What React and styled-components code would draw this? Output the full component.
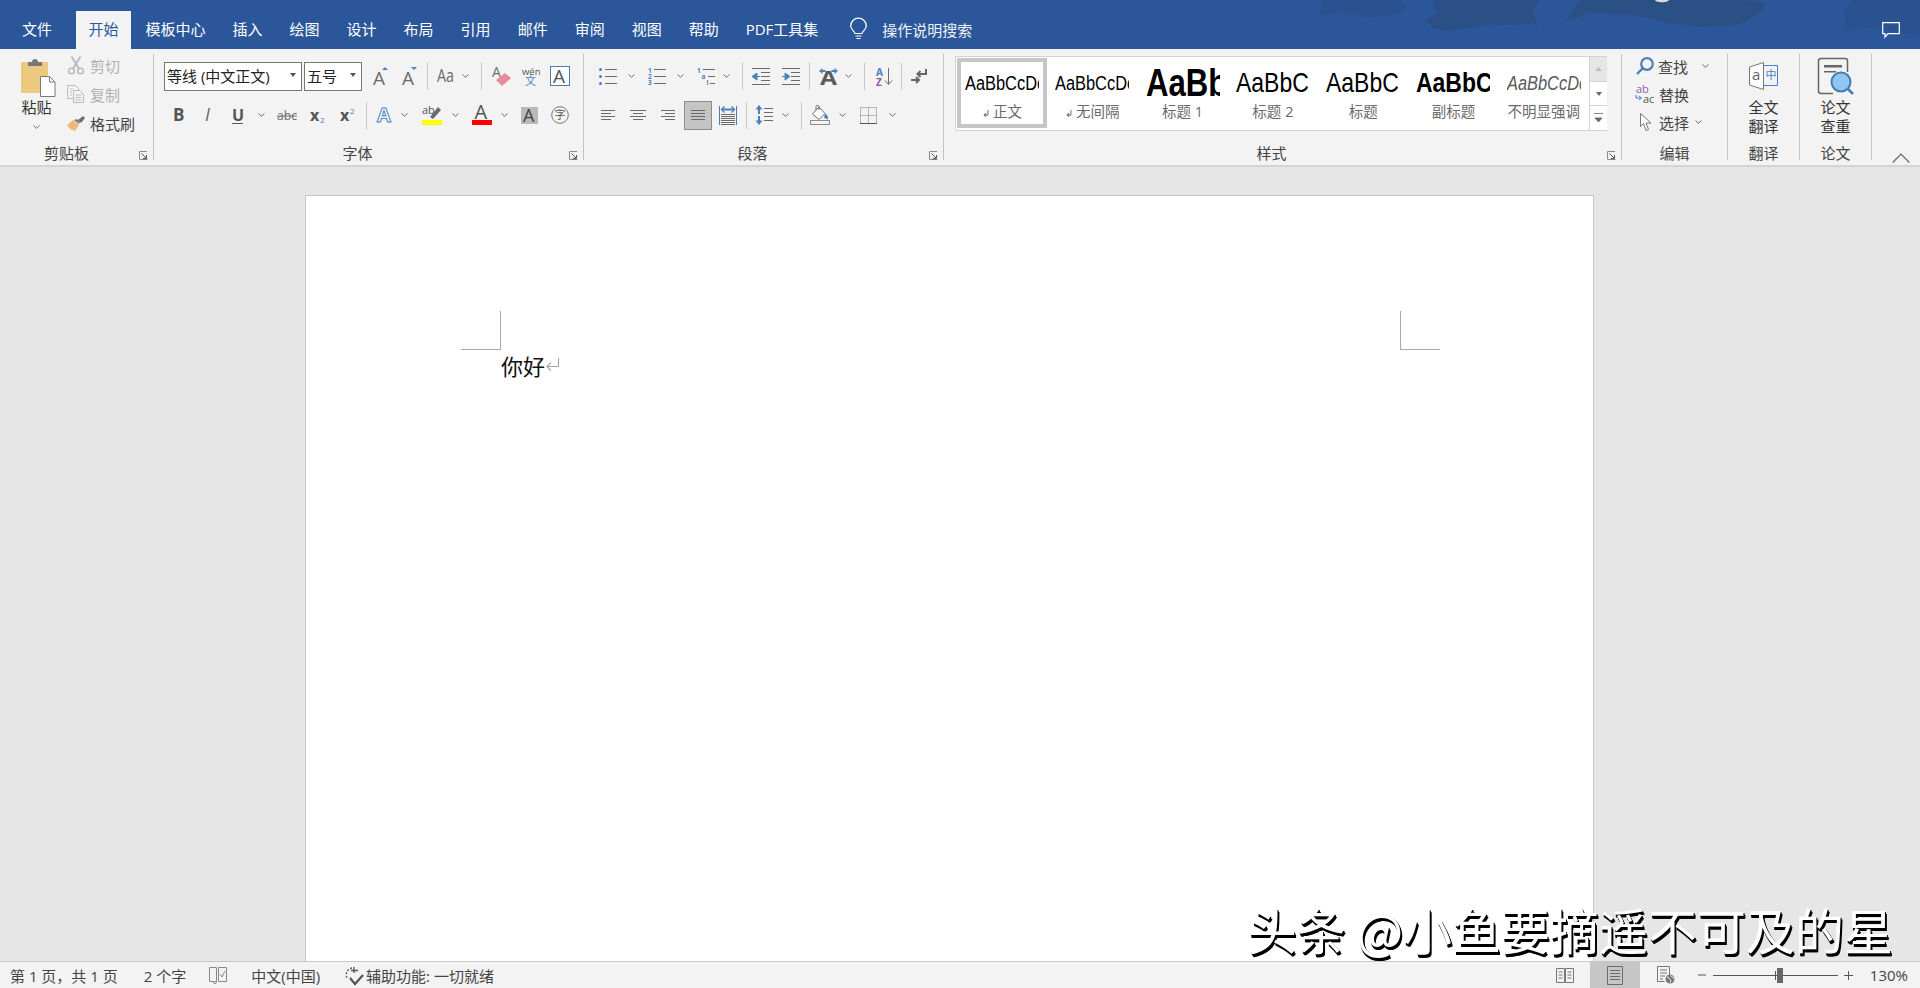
import React from 'react';
import styled, { createGlobalStyle } from 'styled-components';

const GlobalStyle = createGlobalStyle`
  html, body { margin: 0; padding: 0; height: 100%; overflow: hidden; }
  body { font-family: "Open Sans", "Noto Sans CJK SC", sans-serif; color: #444; }
  svg { overflow: visible; }
`;

const tabs = ['开始', '模板中心', '插入', '绘图', '设计', '布局', '引用', '邮件', '审阅', '视图', '帮助', 'PDF工具集'];
const GRAY = '#6b6b6b';
const BLUE = '#4a80c0';
const UI = '"Open Sans", "Liberation Sans", sans-serif';

const Window = styled.div`
  position: relative;
  width: 1920px;
  height: 988px;
  display: flex;
  flex-direction: column;
  overflow: hidden;
  background: #e6e6e6;
`;

const TitleBar = styled.div`
  position: relative;
  flex: none;
  height: 49px;
  background: #2b579a;
  display: flex;
  align-items: flex-end;
`;

const Art = styled.svg`
  position: absolute;
  right: 0;
  top: 0;
`;

const Tab = styled.div`
  position: relative;
  height: 38px;
  line-height: 36px;
  padding: 0 ${p => p.$pad || 12.5}px;
  margin-right: ${p => p.$gap ?? 2}px;
  font-size: 15px;
  white-space: nowrap;
  color: ${p => (p.$active ? '#2b579a' : '#fff')};
  background: ${p => (p.$active ? '#f3f3f3' : 'transparent')};
`;

const SearchTab = styled.div`
  position: relative;
  height: 36px;
  margin: 0 0 2px 17.5px;
  display: flex;
  align-items: center;
  gap: 15px;
  font-size: 15px;
  color: #eef2f8;
`;

const CommentBtn = styled.svg`
  position: absolute;
  left: 1882px;
  top: 22px;
`;

const Ribbon = styled.div`
  flex: none;
  height: 111px;
  padding-top: 5px;
  box-sizing: content-box;
  display: flex;
  align-items: flex-start;
  background: #f3f3f3;
  border-bottom: 2px solid #d4d4d4;
`;

const Group = styled.div`
  position: relative;
  flex: none;
  width: ${p => p.$w}px;
  height: 106px;
  box-sizing: border-box;
  border-right: ${p => (p.$last ? 'none' : '1px solid #c4c4c4')};
  display: flex;
  flex-direction: column;
`;

const GroupBody = styled.div`
  flex: 1;
  min-height: 0;
  display: flex;
  flex-direction: ${p => p.$dir || 'row'};
  padding-top: ${p => p.$top || 0}px;
  gap: ${p => p.$gap || 0}px;
`;

const GroupLabel = styled.div`
  flex: none;
  height: 14px;
  line-height: 14px;
  font-size: 15px;
  text-align: center;
  color: #444;
  padding-right: ${p => p.$shift || 0}px;
  white-space: nowrap;
  overflow: visible;
`;

const Collapse = styled.div`
  flex: none;
  height: 14px;
  margin-top: -4px;
  padding-left: 20px;
`;

const Launcher = styled.svg`
  position: absolute;
  right: 5px;
  bottom: 0;
`;

const ToolRow = styled.div`
  display: flex;
  align-items: center;
  height: 30px;
`;

const Tool = styled.span`
  flex: none;
  display: flex;
  align-items: center;
  justify-content: center;
  margin-left: ${p => p.$ml || 0}px;
  width: ${p => p.$w}px;
`;

const Sep = styled.span`
  flex: none;
  width: 1px;
  height: 27px;
  margin-left: ${p => p.$ml || 0}px;
  background: #c6c6c6;
`;

const ComboBox = styled.div`
  flex: none;
  box-sizing: border-box;
  width: ${p => p.$w}px;
  height: 29px;
  margin-left: ${p => p.$ml || 0}px;
  padding: 0 5px 2px 2px;
  display: flex;
  align-items: center;
  justify-content: space-between;
  background: #fff;
  border: 1px solid #777;
  font-size: 15px;
  color: #222;
  white-space: nowrap;
`;

const DownTri = styled.span`
  width: 0;
  height: 0;
  border-left: 3.5px solid transparent;
  border-right: 3.5px solid transparent;
  border-top: 4px solid ${p => p.$c || '#555'};
`;

const PasteCol = styled.div`
  margin-left: 21px;
  width: 36px;
  padding-top: 4px;
  display: flex;
  flex-direction: column;
  align-items: flex-start;
`;

const PasteLabel = styled.div`
  font-size: 15px;
  line-height: 20px;
  width: 31px;
  text-align: center;
  color: #333;
`;

const PasteChev = styled.div`
  width: 31px;
  display: flex;
  justify-content: center;
  margin-top: 8px;
`;

const SmallCol = styled.div`
  margin: -1px 0 0 10px;
  display: flex;
  flex-direction: column;
  gap: 5px;
`;

const SmallRow = styled.div`
  height: 24px;
  display: flex;
  align-items: center;
  gap: ${p => p.$gap || 6}px;
  font-size: 15px;
  white-space: nowrap;
  color: ${p => (p.$off ? '#b1b1b1' : '#444')};
`;

const IconSlot = styled.span`
  flex: none;
  width: ${p => p.$w || 18}px;
  display: flex;
  align-items: center;
  justify-content: center;
`;

const Gallery = styled.div`
  margin: 2px 0 0 11px;
  width: 652px;
  height: 75px;
  box-sizing: border-box;
  display: flex;
  background: #fff;
  border: 1px solid #d2d2d2;
`;

const StyleItem = styled.div`
  flex: none;
  box-sizing: border-box;
  width: 90.3px;
  height: ${p => (p.$on ? '70px' : '73px')};
  margin-top: ${p => (p.$on ? '1px' : '0')};
  margin-left: ${p => (p.$on ? '1px' : '0')};
  border: ${p => (p.$on ? '4px solid #c6c6c6' : 'none')};
  padding: ${p => (p.$on ? '2px 0 0 4px' : '7px 0 0 8px')};
  display: flex;
  flex-direction: column;
`;

const Preview = styled.div`
  flex: none;
  height: 38px;
  width: 74px;
  overflow: hidden;
  white-space: nowrap;
  display: flex;
  align-items: center;
  color: ${p => p.$c || '#000'};
  font-family: "Liberation Sans", sans-serif;
  font-size: ${p => p.$s}px;
  font-weight: ${p => p.$b || 400};
  font-style: ${p => (p.$i ? 'italic' : 'normal')};
`;

const NarrowText = styled.span`
  flex: none;
  display: inline-block;
  transform: scaleX(.82);
  transform-origin: left center;
`;

const StyleName = styled.div`
  width: 74px;
  font-size: 14.5px;
  line-height: 20px;
  text-align: center;
  white-space: nowrap;
  color: #6a6a6a;
`;

const ParaGlyph = styled.span`
  font-size: 10px;
  margin-right: 3px;
`;

const ScrollCol = styled.div`
  flex: none;
  margin-left: auto;
  width: 18px;
  display: flex;
  flex-direction: column;
`;

const ScrollBtn = styled.div`
  flex: ${p => p.$g || 1};
  box-sizing: border-box;
  display: flex;
  align-items: center;
  justify-content: center;
  border-left: 1px solid #d2d2d2;
  border-top: ${p => (p.$first ? 'none' : '1px solid #d2d2d2')};
  background: ${p => (p.$dim ? '#e6e6e6' : '#fff')};
`;

const EditCol = styled.div`
  margin-top: -2px;
  padding-left: 13px;
  display: flex;
  flex-direction: column;
`;

const EditRow = styled.div`
  height: 28px;
  display: flex;
  align-items: center;
  font-size: 15px;
  white-space: nowrap;
  color: #444;
`;

const BigCol = styled.div`
  width: 100%;
  display: flex;
  flex-direction: column;
  align-items: center;
  padding-top: ${p => p.$top}px;
`;

const BigText = styled.div`
  margin-top: ${p => p.$mt}px;
  font-size: 15px;
  line-height: 19px;
  text-align: center;
  color: #333;
`;

const Workspace = styled.div`
  flex: 1;
  min-height: 0;
  padding: 28px 0 0 305px;
  overflow: hidden;
  background: #e6e6e6;
`;

const Page = styled.div`
  box-sizing: border-box;
  width: 1289px;
  height: 900px;
  padding: 115px 153px 0 155px;
  background: #fff;
  border: 1px solid #c6c6c6;
`;

const Marks = styled.div`
  display: flex;
  justify-content: space-between;
`;

const Mark = styled.div`
  box-sizing: border-box;
  width: 40px;
  height: 39px;
  border-bottom: 1px solid #a9a9a9;
  border-${p => p.$side}: 1px solid #a9a9a9;
`;

const Para = styled.div`
  margin: 2px 0 0 40px;
  display: flex;
  align-items: center;
  gap: 1px;
  font-size: 22px;
  line-height: 26px;
  color: #111;
  font-family: "Noto Sans CJK SC", sans-serif;
`;

const StatusBar = styled.div`
  flex: none;
  height: 27px;
  box-sizing: border-box;
  display: flex;
  align-items: center;
  background: #f3f3f3;
  border-top: 1px solid #c6c6c6;
  font-size: 15px;
  white-space: nowrap;
  color: #444;
`;

const StatusItem = styled.span`
  display: flex;
  align-items: center;
  margin-left: ${p => p.$ml}px;
  gap: ${p => p.$gap || 0}px;
`;

const StatusRight = styled.div`
  margin-left: auto;
  padding-right: 12px;
  display: flex;
  align-items: center;
`;

const ViewBtn = styled.div`
  width: 50px;
  height: 26px;
  display: flex;
  align-items: center;
  justify-content: center;
  margin-left: ${p => p.$ml || 0}px;
  background: ${p => (p.$on ? '#c6c6c6' : 'transparent')};
`;

const ZoomTrack = styled.div`
  position: relative;
  flex: none;
  width: 125px;
  height: 1px;
  margin-left: 7px;
  background: #555;
`;

const ZoomTick = styled.span`
  position: absolute;
  left: 62px;
  top: -4px;
  width: 1px;
  height: 9px;
  background: #555;
`;

const ZoomThumb = styled.span`
  position: absolute;
  left: 64px;
  top: -7px;
  width: 6px;
  height: 15px;
  background: #666;
`;

const Watermark = styled.div`
  position: absolute;
  right: 27px;
  bottom: 29px;
  font-family: "Noto Sans CJK SC", sans-serif;
  font-size: 49px;
  line-height: 60px;
  white-space: nowrap;
  color: #fff;
  text-shadow: 1px 1px 0 #000, 1px 2px 0 #000, 2px 3px 0 #000, 1px 3px 0 #000;
`;

const Chev = ({ c = GRAY }) => (
  <svg width="7" height="4" viewBox="0 0 7 4"><path d="M.5.5l3 2.800 3-2.800" fill="none" stroke={c} strokeWidth="1" /></svg>
);

const LauncherIcon = () => (
  <Launcher width="9" height="9" viewBox="0 0 9 9">
    <path d="M.5 8V.5H8M8.500 8.500h-8" fill="none" stroke="#8a8a8a" />
    <path d="M2.500 2.500L7 7M7.500 4v3.500H4" fill="none" stroke="#555" />
  </Launcher>
);

const Letter = ({ w, h, x, y, s, c = GRAY, b, i, u, strike, fit, children }) => (
  <svg width={w} height={h} viewBox={`0 0 ${w} ${h}`}>
    <text x={x} y={y} fontSize={s} fill={c} fontFamily={UI} fontWeight={b ? 700 : 400} fontStyle={i ? 'italic' : 'normal'}
      textLength={fit} lengthAdjust={fit ? 'spacingAndGlyphs' : undefined}>{children}</text>
    {u && <path d={`M0 ${h - .5}H${w}`} stroke={c} />}
    {strike && <path d={`M0 ${h / 2 + 1}H${w}`} stroke={c} />}
  </svg>
);

const PasteIcon = () => (
  <svg width="35" height="39" viewBox="0 0 35 39">
    <rect x="0" y="4" width="27" height="31" rx="1" fill="#edc87f" />
    <path d="M7 8V4h4c0-4 6-4 6 0h4v4z" fill="#767676" />
    <path d="M19.500 18.500h9l5.500 5.500V38.500H19.500z" fill="#fff" stroke="#7a7a7a" />
    <path d="M28.500 18.500v5.500H34" fill="none" stroke="#7a7a7a" />
  </svg>
);

const CutIcon = () => (
  <svg width="16" height="19" viewBox="0 0 16 19" fill="none" stroke="#bcbcbc" strokeWidth="1.600">
    <circle cx="3.500" cy="15" r="2.800" /><circle cx="12.500" cy="15" r="2.800" />
    <path d="M5 12.500L12.500.5M11 12.500L3.500.5" strokeWidth="2" />
  </svg>
);

const CopyIcon = () => (
  <svg width="17" height="18" viewBox="0 0 17 18" fill="#f3f3f3" stroke="#bcbcbc">
    <path d="M.5.5h8l3 3v10H.5z" />
    <path d="M6.500 5.500h6l4 4v8h-10z" />
    <path d="M8.500 10h6M8.500 12.500h6M8.500 15h6M3 4h3M3 7h2M3 10h2" />
  </svg>
);

const BrushIcon = () => (
  <svg width="18" height="15" viewBox="0 0 18 15">
    <path d="M0 9l6-5 6 5-4 6-5-2z" fill="#e8bd73" />
    <path d="M7 4l3-1 3 3-1 2z" fill="#7c7c7c" />
    <path d="M11 4l5-4 2 2-4 5z" fill="#6d6d6d" />
  </svg>
);

const GrowA = ({ down }) => (
  <svg width="15" height="18" viewBox="0 0 15 18">
    <text x="0" y="17.500" fontSize="19" fill={GRAY} fontFamily={UI}>A</text>
    <path d={down ? 'M9 0h6l-3 3z' : 'M9 3h6l-3-3z'} fill={BLUE} />
  </svg>
);

const EraserIcon = () => (
  <svg width="19" height="20" viewBox="0 0 19 20">
    <text x="0" y="11" fontSize="14" fill={GRAY} fontFamily={UI}>A</text>
    <path d="M4 14l9-7 6 5-9 8z" fill="#e98a9b" />
  </svg>
);

const PinyinIcon = () => (
  <svg width="17" height="19" viewBox="0 0 17 19">
    <text x="0" y="7.500" fontSize="9.500" fill="#555" fontFamily={UI}>wén</text>
    <text x="3" y="18" fontSize="11" fill={BLUE} fontFamily='"Noto Sans CJK SC", sans-serif'>文</text>
  </svg>
);

const BoxA = () => (
  <svg width="20" height="20" viewBox="0 0 20 20">
    <rect x=".5" y=".5" width="19" height="19" fill="#fff" stroke="#4a7fb5" />
    <text x="3" y="16.500" fontSize="19" fill="#555" fontFamily={UI}>A</text>
  </svg>
);

const SubSup = ({ sup }) => (
  <svg width="16" height="18" viewBox="0 0 16 18">
    <text x="0" y="15" fontSize="16" fontWeight="700" fill="#555" fontFamily={UI}>x</text>
    <text x="10" y={sup ? 8 : 17} fontSize="8" fill={BLUE} fontFamily={UI}>2</text>
  </svg>
);

const GlowA = () => (
  <svg width="17" height="18" viewBox="0 0 17 18">
    <text x="1" y="16" fontSize="20" fontWeight="700" fill="#fff" stroke={BLUE} strokeWidth="1" fontFamily={UI}>A</text>
  </svg>
);

const HighlightIcon = () => (
  <svg width="20" height="20" viewBox="0 0 20 20">
    <text x="0" y="9" fontSize="11" fill="#555" fontFamily={UI}>ab</text>
    <path d="M8 12l8-10 3 3-8 9z" fill={GRAY} />
    <rect x="0" y="15" width="20" height="5" fill="#ffff00" />
  </svg>
);

const ColorA = () => (
  <svg width="20" height="20" viewBox="0 0 20 20">
    <text x="2.500" y="14" fontSize="20" fill="#555" fontFamily={UI}>A</text>
    <rect x="0" y="15" width="20" height="5" fill="#ff0000" />
  </svg>
);

const ShadeA = () => (
  <svg width="17" height="17" viewBox="0 0 17 17">
    <rect width="17" height="17" fill="#b9b9b9" />
    <text x="2" y="15" fontSize="18" fill="#444" fontFamily={UI}>A</text>
  </svg>
);

const CircleChar = () => (
  <svg width="18" height="18" viewBox="0 0 18 18">
    <circle cx="9" cy="9" r="8.300" fill="none" stroke="#777" />
    <text x="3.500" y="13" fontSize="11" fill="#555" fontFamily='"Noto Sans CJK SC", sans-serif'>字</text>
  </svg>
);

const Lines = ({ rows }) => (
  <>{rows.map(([x1, x2, y]) => <path key={y + '' + x1} d={`M${x1} ${y}H${x2}`} stroke={GRAY} strokeWidth="1" fill="none" />)}</>
);

const Bullets = () => (
  <svg width="18" height="17" viewBox="0 0 18 17">
    {[1.500, 8.500, 15.500].map(y => <circle key={y} cx="1.500" cy={y} r="1.500" fill={BLUE} />)}
    <Lines rows={[[6, 18, 1.500], [6, 18, 8.500], [6, 18, 15.500]]} />
  </svg>
);

const Numbers = () => (
  <svg width="18" height="17" viewBox="0 0 18 17">
    {['1', '2', '3'].map((n, i) => <text key={n} x="0" y={5 + i * 6} fontSize="6.500" fontWeight="700" fill={BLUE} fontFamily={UI}>{n}</text>)}
    <Lines rows={[[6, 18, 1.500], [6, 18, 8.500], [6, 18, 15.500]]} />
  </svg>
);

const Multi = () => (
  <svg width="18" height="17" viewBox="0 0 18 17">
    <text x="0" y="5" fontSize="6.500" fontWeight="700" fill={BLUE} fontFamily={UI}>1</text>
    <text x="4.500" y="11" fontSize="6.500" fontWeight="700" fill={BLUE} fontFamily={UI}>a</text>
    <text x="9.500" y="17" fontSize="6.500" fontWeight="700" fill={BLUE} fontFamily={UI}>i</text>
    <Lines rows={[[6, 18, 1.500], [11, 18, 8.500], [13, 18, 15.500]]} />
  </svg>
);

const Indent = ({ flip }) => (
  <svg width="18" height="17" viewBox="0 0 18 17">
    <Lines rows={[[0, 18, .5], [9, 18, 4.500], [9, 18, 8.500], [9, 18, 12.500], [0, 18, 16.500]]} />
    <path d={flip ? 'M0 8.500h3V5l5 3.500-5 3.500V8.500' : 'M8 8.500H5V5L0 8.500 5 12V8.500'} fill={BLUE} stroke={BLUE} />
  </svg>
);

const DirIcon = () => (
  <svg width="19" height="17" viewBox="0 0 19 17">
    <path d="M0 3l3.500-3v2h3v2h-3v2zM19 3l-3.500-3v2h-3v2h3v2z" fill={BLUE} />
    <text x="1" y="17" fontSize="19" fontWeight="700" fill="#5a5a5a" fontFamily={UI} textLength="17" lengthAdjust="spacingAndGlyphs">A</text>
  </svg>
);

const SortIcon = () => (
  <svg width="17" height="19" viewBox="0 0 17 19">
    <text x="0" y="9" fontSize="10" fontWeight="700" fill={BLUE} fontFamily={UI}>A</text>
    <text x="0" y="19" fontSize="10" fontWeight="700" fill="#8b5aad" fontFamily={UI}>Z</text>
    <path d="M12.500 1v16M9 13.500l3.500 4 3.500-4" fill="none" stroke={GRAY} />
  </svg>
);

const MarkIcon = () => (
  <svg width="16" height="15" viewBox="0 0 16 15">
    <path d="M15 0v5H7M9.500 2L6.500 5l3 3" fill="none" stroke="#666" strokeWidth="2" />
    <path d="M0 11h7M5 8l3 3-3 3" fill="none" stroke="#666" strokeWidth="2" />
  </svg>
);

const AlignIcon = ({ pattern, w }) => (
  <svg width={w} height="11" viewBox={`0 0 ${w} 11`}>
    <Lines rows={pattern} />
  </svg>
);

const JustifyBtn = styled.span`
  flex: none;
  box-sizing: border-box;
  width: 28px;
  height: 29px;
  margin-left: ${p => p.$ml}px;
  display: flex;
  align-items: center;
  justify-content: center;
  background: #c4c4c4;
  border: 1px solid #8c8c8c;
`;

const DistIcon = () => (
  <svg width="18" height="19" viewBox="0 0 18 19">
    <path d="M.5 0v19M17.500 0v19" stroke="#4a7fb5" fill="none" />
    <path d="M3 3.500h12" stroke={BLUE} strokeWidth="2" />
    <path d="M5.500 .5L2.500 3.500l3 3M12.500 .5l3 3-3 3" fill="none" stroke={BLUE} strokeWidth="1.400" />
    <Lines rows={[[2, 16, 8.500], [2, 16, 10.500], [2, 16, 12.500], [2, 16, 14.500], [2, 16, 16.500], [2, 16, 18.500]]} />
  </svg>
);

const SpacingIcon = () => (
  <svg width="17" height="20" viewBox="0 0 17 20">
    <path d="M3 0l3.500 4.500H4V9H2V4.500H-.5zM3 20l3.500-4.500H4V11H2v4.500H-.5z" fill={BLUE} />
    <Lines rows={[[8, 17, 3.500], [8, 17, 7.500], [8, 17, 11.500], [8, 17, 15.500]]} />
  </svg>
);

const BucketIcon = () => (
  <svg width="20" height="20" viewBox="0 0 20 20">
    <path d="M2.500 9L9 2l6 6.500-6 6z" fill="#fff" stroke={GRAY} />
    <path d="M6 5V1.500C6 0 9 0 9 1.500V5" fill="none" stroke={GRAY} />
    <path d="M15 8.500c2 1 3.500 3 3 6l-4-2z" fill={BLUE} />
    <rect x=".5" y="15.500" width="19" height="4" fill="#f3f3f3" stroke="#8f8f8f" />
  </svg>
);

const BordersIcon = () => (
  <svg width="17" height="17" viewBox="0 0 17 17">
    <path d="M.5.5h16v16H.5zM8.500 .5v16M.5 8.500h16" fill="none" stroke="#777" strokeDasharray="1 1" />
    <path d="M0 16.500h17" stroke="#555" />
  </svg>
);

const SearchIcon = () => (
  <svg width="18" height="18" viewBox="0 0 18 18">
    <circle cx="11" cy="7" r="5.800" fill="none" stroke="#4a7fb5" strokeWidth="2.200" />
    <path d="M6.500 11.500L1 17" stroke="#4a7fb5" strokeWidth="2.400" />
  </svg>
);

const ReplaceIcon = () => (
  <svg width="20" height="19" viewBox="0 0 20 19">
    <text x="1" y="8" fontSize="11" fill="#8b5aad" fontFamily={UI}>ab</text>
    <text x="8" y="18" fontSize="11" fill="#555" fontFamily={UI}>ac</text>
    <path d="M1 10v3h5M4 11l2.500 2L4 15" fill="none" stroke={BLUE} />
  </svg>
);

const CursorIcon = () => (
  <svg width="11" height="18" viewBox="0 0 11 18">
    <path d="M.5.5v13l3-3 2.500 7 2.500-1-2.500-6.500h5z" fill="#fff" stroke="#777" />
  </svg>
);

const TranslateIcon = () => (
  <svg width="29" height="28" viewBox="0 0 29 28">
    <path d="M.5 5L14.500 .5v27L.5 23z" fill="#fff" stroke="#777" />
    <text x="3" y="18" fontSize="15" fill="#666" fontFamily={UI}>a</text>
    <path d="M15 3.500h13.500v20H15" fill="none" stroke={BLUE} />
    <text x="16.500" y="17" fontSize="11" fill={BLUE} fontFamily='"Noto Sans CJK SC", sans-serif'>中</text>
  </svg>
);

const PaperIcon = () => (
  <svg width="36" height="37" viewBox="0 0 36 37">
    <path d="M15 35.500H3c-1.500 0-2.500-1-2.500-2.500V3C.5 1.500 1.500.5 3 .5h24c1.500 0 2.500 1 2.500 2.500v11" fill="none" stroke="#666" strokeWidth="1.500" />
    <path d="M6 7h18v2.500H6zM6 13h12v1.500H6z" fill="#666" />
    <circle cx="23" cy="24" r="9.500" fill="#93c5f2" stroke="#3d7fb5" strokeWidth="2" />
    <path d="M30 31l5 5" stroke="#3d7fb5" strokeWidth="2.500" />
  </svg>
);

const ReturnMark = () => (
  <svg width="13" height="14" viewBox="0 0 13 14">
    <path d="M12.500 0v8.500H1M5 4.500L1 8.500l4 4" fill="none" stroke="#a6a6a6" strokeWidth="1.100" />
  </svg>
);

const BookIcon = () => (
  <svg width="18" height="17" viewBox="0 0 18 17" fill="none" stroke="#777">
    <path d="M.5 1.500h8v14h-8zM9.500 1.500h8v14h-8zM2.500 5h4M2.500 8h4M2.500 11h4M11.500 5h4M11.500 8h4M11.500 11h4" />
  </svg>
);

const DocIcon = () => (
  <svg width="16" height="19" viewBox="0 0 16 19" fill="none" stroke="#6b6b6b">
    <path d="M.5.5h15v18H.5zM3 4.500h10M3 7.500h10M3 10.500h10M3 13.500h10" />
  </svg>
);

const WebIcon = () => (
  <svg width="18" height="18" viewBox="0 0 18 18" fill="none" stroke="#777">
    <path d="M.5.5h12v10M.5.5v15h7M3 4h7M3 7h7M3 10h5M3 13h3" />
    <circle cx="13" cy="13" r="4.500" fill="#777" stroke="none" />
    <path d="M10 11c2 0 2 2 3 2.500s1 2 0 3M14 9.500c0 2 3 1.500 3 3" stroke="#fff" />
  </svg>
);

const ProofIcon = () => (
  <svg width="18" height="17" viewBox="0 0 18 17" fill="none" stroke="#888">
    <path d="M.5.500h7v14h-7zM9.500.500h8v14h-8zM11 7l2 3 3-6M4 15l2 2 2-2" />
  </svg>
);

const AccessIcon = () => (
  <svg width="21" height="21" viewBox="0 0 21 21" fill="none" stroke="#555" strokeWidth="1.300">
    <path d="M8 3a7 7 0 0 0-5 10" strokeDasharray="2 1.500" />
    <path d="M10 2v6M7 5.500h7" />
    <path d="M6 13l5 6 8-9" strokeWidth="2.200" />
  </svg>
);

const styleItems = [
  { name: '正文', mark: true, s: 20, text: 'AaBbCcDc', on: true },
  { name: '无间隔', mark: true, s: 20, text: 'AaBbCcDc' },
  { name: '标题 1', s: 38, text: 'AaBb', b: 700 },
  { name: '标题 2', s: 28, text: 'AaBbC' },
  { name: '标题', s: 28, text: 'AaBbC' },
  { name: '副标题', s: 28, text: 'AaBbC', b: 700 },
  { name: '不明显强调', s: 20, text: 'AaBbCcDc', i: true, c: '#5a5a5a' },
];

export default function App() {
  return (
    <Window>
      <GlobalStyle />
      <TitleBar>
        <Art width="600" height="49" viewBox="1320 0 600 49">
          <path d="M1323 0l-3 15 20-2 27 4 33-2 7-8-7-7z" fill="#2b5290" />
          <path d="M1432 0l5 13-12 7 8 8 17 3 37-6 46-1 4 3-4-17 7-10z" fill="#2b5086" />
          <path d="M1580 0l-15 22 22-9h13l33 2 34 8 33 4 40-2 23-15 2-7-22-3z" fill="#2b5086" />
          <path d="M1853 0l-10 10 2 13-3 9 25-4 33 4 20 4V0z" fill="#2b5290" />
          <path d="M1655 0h14c-1 3-13 3-14 0z" fill="#d9d9d9" />
        </Art>
        <Tab $pad={22} $gap={2}>文件</Tab>
        {tabs.map((t, i) => <Tab key={t} $active={i === 0}>{t}</Tab>)}
        <SearchTab>
          <svg width="17" height="21" viewBox="0 0 17 21" fill="none" stroke="#fff" strokeWidth="1.200">
            <path d="M5 14.500C4.500 12 .7 10.500.7 7a7.800 7.800 0 0 1 15.600 0c0 3.500-3.800 5-4.300 7.500z" />
            <path d="M5.500 17h6M6.500 19.500h4" />
          </svg>
          操作说明搜索
        </SearchTab>
        <CommentBtn width="18" height="17" viewBox="0 0 18 17">
          <path d="M.7.7h16.600v11H6l-3 3.500v-3.500H.7z" fill="none" stroke="#fff" strokeWidth="1.200" />
        </CommentBtn>
      </TitleBar>

      <Ribbon>
        <Group $w={154}>
          <GroupBody>
            <PasteCol>
              <PasteIcon />
              <PasteLabel>粘贴</PasteLabel>
              <PasteChev><Chev /></PasteChev>
            </PasteCol>
            <SmallCol>
              <SmallRow $off><IconSlot $w={17}><CutIcon /></IconSlot>剪切</SmallRow>
              <SmallRow $off><IconSlot $w={17}><CopyIcon /></IconSlot>复制</SmallRow>
              <SmallRow><IconSlot $w={17}><BrushIcon /></IconSlot>格式刷</SmallRow>
            </SmallCol>
          </GroupBody>
          <GroupLabel $shift={20}>剪贴板</GroupLabel>
          <LauncherIcon />
        </Group>

        <Group $w={430}>
          <GroupBody $dir="column" $top={7} $gap={9}>
            <ToolRow>
              <ComboBox $ml={10} $w={138}>等线 (中文正文)<DownTri /></ComboBox>
              <ComboBox $ml={2} $w={58}>五号<DownTri /></ComboBox>
              <Tool $ml={11} $w={15}><GrowA /></Tool>
              <Tool $ml={14} $w={15}><GrowA down /></Tool>
              <Sep $ml={10} />
              <Tool $ml={9} $w={17}><Letter w={17} h={18} x={0} y={15} s={18} fit={17}>Aa</Letter></Tool>
              <Tool $ml={7} $w={9}><Chev /></Tool>
              <Sep $ml={11} />
              <Tool $ml={10} $w={19}><EraserIcon /></Tool>
              <Tool $ml={11} $w={17}><PinyinIcon /></Tool>
              <Tool $ml={11} $w={20}><BoxA /></Tool>
            </ToolRow>
            <ToolRow>
              <Tool $ml={19} $w={9}><Letter w={10} h={16} x={0} y={14} s={17} c="#555" b>B</Letter></Tool>
              <Tool $ml={22} $w={10}><Letter w={10} h={16} x={1} y={14} s={18} c="#666" i>I</Letter></Tool>
              <Tool $ml={18} $w={11}><Letter w={11} h={17} x={0} y={14} s={16} c="#555" b u>U</Letter></Tool>
              <Tool $ml={14} $w={9}><Chev /></Tool>
              <Tool $ml={11} $w={20}><Letter w={20} h={14} x={0} y={12} s={13} strike fit={20}>abc</Letter></Tool>
              <Tool $ml={13} $w={16}><SubSup /></Tool>
              <Tool $ml={14} $w={16}><SubSup sup /></Tool>
              <Sep $ml={10} />
              <Tool $ml={9} $w={17}><GlowA /></Tool>
              <Tool $ml={7} $w={9}><Chev /></Tool>
              <Tool $ml={13} $w={20}><HighlightIcon /></Tool>
              <Tool $ml={9} $w={9}><Chev /></Tool>
              <Tool $ml={12} $w={20}><ColorA /></Tool>
              <Tool $ml={8} $w={9}><Chev /></Tool>
              <Tool $ml={12} $w={17}><ShadeA /></Tool>
              <Tool $ml={13} $w={18}><CircleChar /></Tool>
            </ToolRow>
          </GroupBody>
          <GroupLabel $shift={22}>字体</GroupLabel>
          <LauncherIcon />
        </Group>

        <Group $w={360}>
          <GroupBody $dir="column" $top={7} $gap={9}>
            <ToolRow>
              <Tool $ml={15} $w={18}><Bullets /></Tool>
              <Tool $ml={10} $w={9}><Chev /></Tool>
              <Tool $ml={12} $w={18}><Numbers /></Tool>
              <Tool $ml={10} $w={9}><Chev /></Tool>
              <Tool $ml={12} $w={18}><Multi /></Tool>
              <Tool $ml={7} $w={9}><Chev /></Tool>
              <Sep $ml={11} />
              <Tool $ml={9} $w={18}><Indent /></Tool>
              <Tool $ml={12} $w={18}><Indent flip /></Tool>
              <Sep $ml={9} />
              <Tool $ml={9} $w={19}><DirIcon /></Tool>
              <Tool $ml={6} $w={9}><Chev /></Tool>
              <Sep $ml={11} />
              <Tool $ml={11} $w={17}><SortIcon /></Tool>
              <Sep $ml={8} />
              <Tool $ml={9} $w={16}><MarkIcon /></Tool>
            </ToolRow>
            <ToolRow>
              <Tool $ml={17} $w={14}><AlignIcon w={14} pattern={[[0, 14, .5], [0, 10, 3.500], [0, 14, 6.500], [0, 10, 9.500]]} /></Tool>
              <Tool $ml={15} $w={16}><AlignIcon w={16} pattern={[[0, 16, .5], [3, 13, 3.500], [0, 16, 6.500], [3, 13, 9.500]]} /></Tool>
              <Tool $ml={15} $w={14}><AlignIcon w={14} pattern={[[0, 14, .5], [4, 14, 3.500], [0, 14, 6.500], [4, 14, 9.500]]} /></Tool>
              <JustifyBtn $ml={9}><AlignIcon w={14} pattern={[[0, 14, .5], [0, 14, 3.500], [0, 14, 6.500], [0, 14, 9.500]]} /></JustifyBtn>
              <Tool $ml={7} $w={18}><DistIcon /></Tool>
              <Sep $ml={9} />
              <Tool $ml={9} $w={17}><SpacingIcon /></Tool>
              <Tool $ml={8} $w={9}><Chev /></Tool>
              <Sep $ml={11} />
              <Tool $ml={8} $w={20}><BucketIcon /></Tool>
              <Tool $ml={8} $w={9}><Chev /></Tool>
              <Tool $ml={13} $w={17}><BordersIcon /></Tool>
              <Tool $ml={11} $w={9}><Chev /></Tool>
            </ToolRow>
          </GroupBody>
          <GroupLabel $shift={22}>段落</GroupLabel>
          <LauncherIcon />
        </Group>

        <Group $w={678}>
          <GroupBody>
            <Gallery>
              {styleItems.map(it => (
                <StyleItem key={it.name} $on={it.on}>
                  <Preview $s={it.s} $b={it.b} $i={it.i} $c={it.c}><NarrowText>{it.text}</NarrowText></Preview>
                  <StyleName>{it.mark && <ParaGlyph>↲</ParaGlyph>}{it.name}</StyleName>
                </StyleItem>
              ))}
              <ScrollCol>
                <ScrollBtn $first $dim>
                  <svg width="7" height="4" viewBox="0 0 7 4"><path d="M0 4l3.500-4L7 4z" fill="#bdbdbd" /></svg>
                </ScrollBtn>
                <ScrollBtn><DownTri $c="#666" /></ScrollBtn>
                <ScrollBtn>
                  <svg width="9" height="10" viewBox="0 0 9 10"><path d="M0 .5h9M1 5h7L4.500 9z" fill="#666" stroke="#666" strokeWidth=".8" /></svg>
                </ScrollBtn>
              </ScrollCol>
            </Gallery>
          </GroupBody>
          <GroupLabel $shift={22}>样式</GroupLabel>
          <LauncherIcon />
        </Group>

        <Group $w={106}>
          <GroupBody>
            <EditCol>
              <EditRow><IconSlot $w={20}><SearchIcon /></IconSlot><Tool $ml={3} $w={30}>查找</Tool><Tool $ml={13} $w={9}><Chev /></Tool></EditRow>
              <EditRow><IconSlot $w={20}><ReplaceIcon /></IconSlot><Tool $ml={4} $w={30}>替换</Tool></EditRow>
              <EditRow><IconSlot $w={20}><CursorIcon /></IconSlot><Tool $ml={4} $w={30}>选择</Tool><Tool $ml={5} $w={9}><Chev /></Tool></EditRow>
            </EditCol>
          </GroupBody>
          <GroupLabel>编辑</GroupLabel>
        </Group>

        <Group $w={72}>
          <GroupBody>
            <BigCol $top={8}>
              <TranslateIcon />
              <BigText $mt={8}>全文<br />翻译</BigText>
            </BigCol>
          </GroupBody>
          <GroupLabel>翻译</GroupLabel>
        </Group>

        <Group $w={72}>
          <GroupBody>
            <BigCol $top={4}>
              <PaperIcon />
              <BigText $mt={3}>论文<br />查重</BigText>
            </BigCol>
          </GroupBody>
          <GroupLabel>论文</GroupLabel>
        </Group>

        <Group $w={48} $last>
          <GroupBody />
          <Collapse>
            <svg width="18" height="10" viewBox="0 0 18 10"><path d="M.7 9.500L9 1l8.300 8.500" fill="none" stroke="#666" strokeWidth="1.200" /></svg>
          </Collapse>
        </Group>
      </Ribbon>

      <Workspace>
        <Page>
          <Marks>
            <Mark $side="right" />
            <Mark $side="left" />
          </Marks>
          <Para>你好<ReturnMark /></Para>
        </Page>
      </Workspace>

      <StatusBar>
        <StatusItem $ml={10}>第 1 页，共 1 页</StatusItem>
        <StatusItem $ml={26}>2 个字</StatusItem>
        <StatusItem $ml={23}><ProofIcon /></StatusItem>
        <StatusItem $ml={24}>中文(中国)</StatusItem>
        <StatusItem $ml={24} $gap={1}><AccessIcon />辅助功能: 一切就绪</StatusItem>
        <StatusRight>
          <BookIcon />
          <ViewBtn $ml={16} $on><DocIcon /></ViewBtn>
          <StatusItem $ml={17}><WebIcon /></StatusItem>
          <StatusItem $ml={23}>
            <svg width="8" height="2" viewBox="0 0 8 2"><path d="M0 1h8" stroke="#555" /></svg>
          </StatusItem>
          <ZoomTrack><ZoomTick /><ZoomThumb /></ZoomTrack>
          <StatusItem $ml={6}>
            <svg width="9" height="9" viewBox="0 0 9 9"><path d="M0 4.500h9M4.500 0v9" stroke="#555" /></svg>
          </StatusItem>
          <StatusItem $ml={17}>130%</StatusItem>
        </StatusRight>
      </StatusBar>

      <Watermark>头条 @小鱼要摘遥不可及的星</Watermark>
    </Window>
  );
}
